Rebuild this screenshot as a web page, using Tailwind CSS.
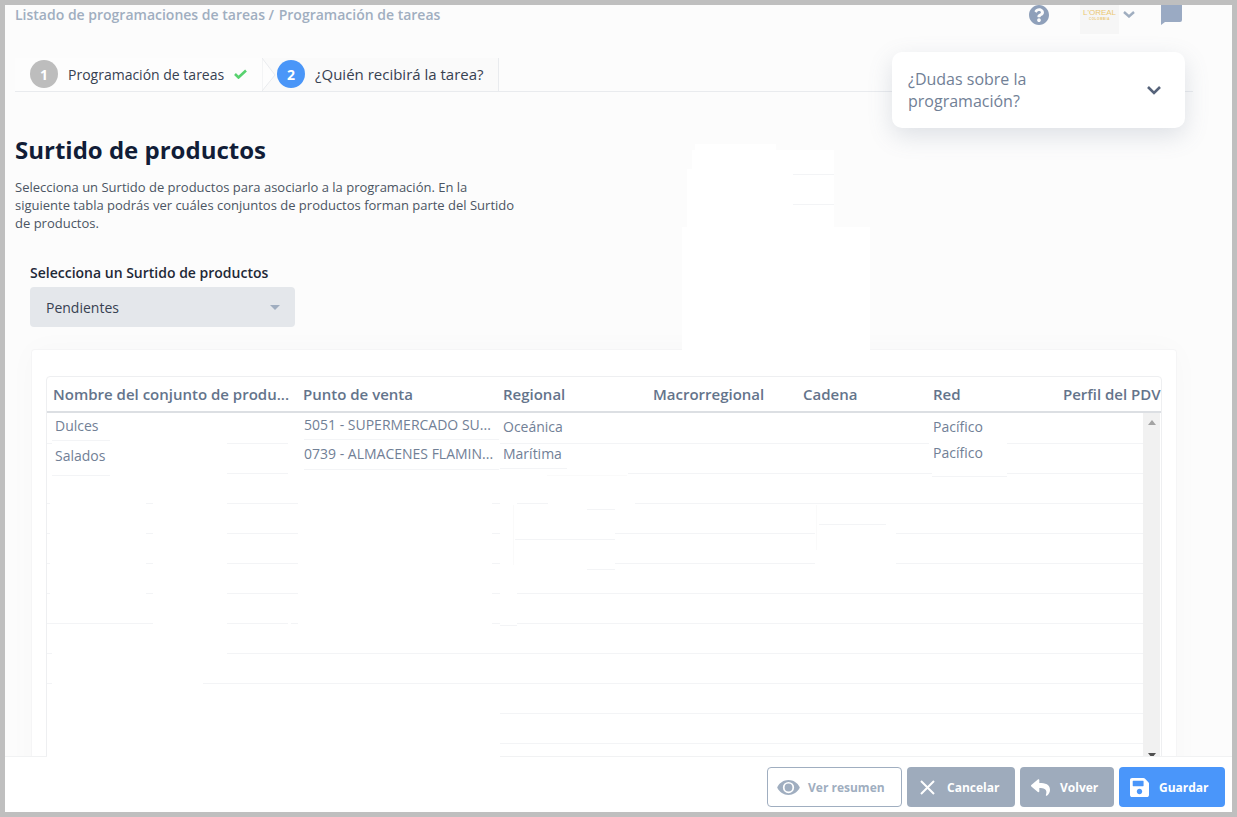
<!DOCTYPE html>
<html lang="es">
<head>
    <meta charset="UTF-8">
    <meta name="viewport" content="width=device-width, initial-scale=1.0">
    <title>Programación de tareas</title>
    <script src="https://cdn.jsdelivr.net/npm/@tailwindcss/browser@4"></script>
</head>
<body class="bg-[#bfbfbf] h-[817px] overflow-hidden p-[5px] font-['Open_Sans',sans-serif]">
    <main class="relative flex flex-col w-[1227px] h-[807px] overflow-hidden bg-[#fcfcfc]">
        <div class="flex-1 min-h-0 overflow-hidden">
            <!-- top bar -->
            <div class="flex items-start h-[53px] pl-[10px] pr-[50px]">
                <p class="text-[14px] leading-[20px] font-semibold text-[#a0aec0]">Listado de programaciones de tareas /<span class="ml-[1px]"> Programación de tareas</span></p>
                <svg class="ml-auto mt-0 w-[20px] h-[20px] fill-[#8fa0ba]" viewBox="8 8 496 496"><path d="M504 256c0 136.997-111.043 248-248 248S8 392.997 8 256C8 119.083 119.043 8 256 8s248 111.083 248 248zM262.655 90c-54.497 0-89.255 22.957-116.549 63.758-3.536 5.286-2.353 12.415 2.715 16.258l34.699 26.31c5.205 3.947 12.621 3.008 16.665-2.122 17.864-22.658 30.113-35.797 57.303-35.797 20.429 0 45.698 13.148 45.698 32.958 0 14.976-12.363 22.667-32.534 33.976C247.128 238.528 216 254.941 216 296v4c0 6.627 5.373 12 12 12h56c6.627 0 12-5.373 12-12v-1.333c0-28.462 83.186-29.647 83.186-106.667 0-58.002-60.165-102-116.531-102zM256 338c-25.365 0-46 20.635-46 46 0 25.364 20.635 46 46 46s46-20.636 46-46c0-25.365-20.635-46-46-46z"/></svg>
                <div class="ml-[31px] flex flex-col items-center justify-start w-[39px] h-[29px] pt-[4px] bg-[#f6f6f6] text-[#ebc873]">
                    <span class="text-[8px] leading-[8px] font-['Liberation_Sans',sans-serif]">L'OREAL</span>
                    <span class="text-[3px] leading-[4px] font-bold tracking-[0.6px] font-['Liberation_Sans',sans-serif]">COLOMBIA</span>
                </div>
                <svg class="ml-[4px] mt-[6px] w-[12px] h-[7px] stroke-[#a0aec0] fill-none" viewBox="0 0 12 7" stroke-width="2.4"><path d="M1 1l5 4.5L11 1"/></svg>
                <svg class="ml-[26px] w-[21px] h-[20px] fill-[#9aaac3]" viewBox="0 0 21 20"><path d="M0 0h21v15a2 2 0 0 1-2 2H4l-4 3z"/></svg>
            </div>

            <!-- steps -->
            <div class="flex ml-[10px] w-[1178px] h-[34px] border-b border-[#e9ebee]">
                <div class="flex items-center w-[247px] pl-[15px] pb-[1px] bg-[#fdfdfd]">
                    <span class="flex items-center justify-center w-[28px] h-[28px] rounded-full bg-[#bdbdbd] text-white text-[14px] font-bold">1</span>
                    <span class="ml-[10px] text-[14px] text-[#374151]">Programación de tareas</span>
                    <svg class="ml-[10px] w-[13px] h-[10px] stroke-[#58d26f] fill-none" viewBox="0 0 13 10" stroke-width="2.6"><path d="M1 5l3.5 3.5L12 1.5"/></svg>
                </div>
                <div class="flex items-center w-[237px] bg-[#fafafa] border-r border-[#e9ebee] pb-[1px]">
                    <svg class="w-[15px] h-[33px] shrink-0" viewBox="0 0 15 33"><path d="M0 0L13 17 0 33z" fill="#fdfdfd" stroke="#e9ebee"/></svg>
                    <span class="flex items-center justify-center w-[28px] h-[28px] rounded-full bg-[#4a96f8] text-white text-[14px] font-bold">2</span>
                    <span class="ml-[10px] text-[15px] text-[#374151]">¿Quién recibirá la tarea?</span>
                </div>
            </div>

            <!-- intro -->
            <h1 class="mt-[42px] ml-[10px] text-[24px] leading-[32px] font-bold text-[#111d37]">Surtido de productos</h1>
            <p class="mt-[12px] ml-[10px] w-[510px] text-[13px] leading-[18px] text-[#4b5563]">Selecciona un Surtido de productos para asociarlo a la programación. En la siguiente tabla podrás ver cuáles conjuntos de productos forman parte del Surtido de productos.</p>

            <label class="block mt-[31px] ml-[25px] text-[14px] leading-[20px] font-semibold text-[#1f2937]">Selecciona un Surtido de productos</label>
            <div class="flex items-center justify-between mt-[4px] ml-[25px] w-[265px] h-[40px] pl-[16px] pr-[15px] rounded bg-[#e4e7eb] text-[14px] text-[#374151]">
                <span>Pendientes</span>
                <span class="w-0 h-0 border-x-[5.5px] border-x-transparent border-t-[5px] border-t-[#a0aec0]"></span>
            </div>

            <!-- table card -->
            <section class="mt-[22px] ml-[26px] w-[1146px] h-[500px] pt-[26px] pl-[14px] bg-white rounded-sm border-t border-l border-r border-[#f5f5f6] shadow-[0_0_30px_rgba(0,0,0,0.025)]">
                <div class="w-[1116px] h-[420px] overflow-hidden rounded-t border border-[#eeeff1]">
                    <div class="grid grid-cols-[250px_200px_150px_150px_130px_130px_130px] h-[36px] border-b-2 border-[#dcdfe3] items-center text-[15px] font-semibold text-[#64748b] whitespace-nowrap">
                        <div class="pl-[6px]">Nombre del conjunto de produ...</div>
                        <div class="pl-[6px]">Punto de venta</div>
                        <div class="pl-[6px]">Regional</div>
                        <div class="pl-[6px]">Macrorregional</div>
                        <div class="pl-[6px]">Cadena</div>
                        <div class="pl-[6px]">Red</div>
                        <div class="pl-[6px]">Perfil del PDV</div>
                    </div>
                    <div class="relative flex">
                        <div class="relative w-[1096px] text-[14px] leading-[20px] text-[#718096] whitespace-nowrap">
                            <svg class="absolute left-0 top-0 w-[1097px] h-[343px] fill-none" viewBox="47 413 1097 343">
                                <path stroke="#f3f4f6" d="M52 440.5H110M304 439.5H499M47 443.5H52M227 443.5H288M500 443.5H929M1007 443.5H1143
                                    M500 468.5H567M304 469.5H499M227 473.5H288M628 473.5H932M1007 473.5H1143M52 475.5H110M932 476.5H1007
                                    M47 503.5H50M146 503.5H153M227 503.5H298M492 503.5H500M517 503.5H548M635 503.5H1143M587 509.5H615
                                    M819 524.5H886M47 533.5H50M146 533.5H153M227 533.5H298M492 533.5H500M615 533.5H815M896 533.5H1143M515 539.5H615
                                    M47 563.5H50M146 563.5H153M227 563.5H298M492 563.5H500M615 563.5H815M896 563.5H1143M587 569.5H615
                                    M47 593.5H50M146 593.5H153M227 593.5H298M492 593.5H500M517 593.5H1143
                                    M47 623.5H153M227 623.5H288M291 623.5H298M492 623.5H500M517 623.5H1143M500 625.5H517
                                    M47 653.5H52M227 653.5H1143M47 683.5H52M203 683.5H1143M500 713.5H1143M500 743.5H1143"/>
                                <path stroke="#fafafa" d="M547 475.5H627M513.5 505V565M816.5 505V550"/>
                            </svg>
                            <div class="relative grid grid-cols-[250px_200px_150px_150px_130px_130px_16px] h-[30px]">
                                <div class="pl-[8px] pt-[3px]">Dulces</div>
                                <div class="pl-[7px] pt-[2px]">5051 - SUPERMERCADO SU...</div>
                                <div class="pl-[6px] pt-[4px]">Oceánica</div>
                                <div></div>
                                <div></div>
                                <div class="pl-[6px] pt-[4px]">Pacífico</div>
                            </div>
                            <div class="relative grid grid-cols-[250px_200px_150px_150px_130px_130px_16px] h-[30px]">
                                <div class="pl-[8px] pt-[3px]">Salados</div>
                                <div class="pl-[7px] pt-[1px]">0739 - ALMACENES FLAMIN...</div>
                                <div class="pl-[6px] pt-[1px]">Marítima</div>
                                <div></div>
                                <div></div>
                                <div class="pl-[6px]">Pacífico</div>
                            </div>
                        </div>
                        <!-- scrollbar -->
                        <div class="flex flex-col items-center justify-between w-[17px] h-[344px] bg-[#f1f1f1] pt-[7px] pb-0">
                            <span class="w-0 h-0 border-x-[4px] border-x-transparent border-b-[5px] border-b-[#a3a3a3]"></span>
                            <span class="w-0 h-0 border-x-[4px] border-x-transparent border-t-[5px] border-t-[#505050] mb-[-1px]"></span>
                        </div>
                    </div>
                </div>
            </section>
        </div>

        <!-- footer actions -->
        <footer class="relative flex justify-end gap-[5px] h-[56px] shrink-0 pt-[10px] pr-[7px] bg-white border-t border-[#f1f2f3] text-[12px] font-bold">
            <span class="absolute left-[42px] top-[-1px] w-[453px] h-px bg-white"></span>
            <button class="flex items-center w-[135px] h-[40px] pl-[9px] rounded border border-[#a0aec0] bg-white text-[#a0aec0]">
                <svg class="w-[23px] h-[15px] fill-[#a0aec0]" viewBox="0 64 576 384"><path fill-rule="evenodd" d="M572.52 241.4C518.29 135.59 410.93 64 288 64S57.68 135.64 3.48 241.41a32.35 32.35 0 0 0 0 29.19C57.71 376.41 165.07 448 288 448s230.32-71.64 284.52-177.41a32.35 32.35 0 0 0 0-29.19zM288 400a144 144 0 1 1 0-288 144 144 0 0 1 0 288z"/><circle cx="288" cy="256" r="100"/></svg>
                <span class="ml-[8px] mt-[1px]">Ver resumen</span>
            </button>
            <button class="flex items-center w-[108px] h-[40px] pl-[13px] rounded bg-[#9eabbc] text-white">
                <svg class="w-[15px] h-[15px] stroke-white fill-none" viewBox="0 0 15 15" stroke-width="2"><path d="M1 1l13 13M14 1L1 14"/></svg>
                <span class="ml-[12px] mt-[1px]">Cancelar</span>
            </button>
            <button class="flex items-center w-[94px] h-[40px] pl-[11px] rounded bg-[#9eabbc] text-white">
                <svg class="w-[19px] h-[19px] fill-white" viewBox="0 0 512 512"><path d="M8.309 189.836L184.313 37.851C199.719 24.546 224 35.347 224 56.015v80.053c160.629 1.839 288 34.032 288 186.258 0 61.441-39.581 122.309-83.333 154.132-13.653 9.931-33.111-2.533-28.077-18.631 45.344-145.012-21.507-183.51-176.59-185.742V360c0 20.7-24.3 31.453-39.687 18.164l-176.004-152c-11.071-9.562-11.086-26.753 0-36.328z"/></svg>
                <span class="ml-[10px] mt-[1px]">Volver</span>
            </button>
            <button class="flex items-center w-[106px] h-[40px] pl-[11px] rounded bg-[#4a96fa] text-white">
                <svg class="w-[19px] h-[19px] fill-white" viewBox="0 32 448 448"><path d="M433.941 129.941l-83.882-83.882A48 48 0 0 0 316.118 32H48C21.49 32 0 53.49 0 80v352c0 26.51 21.49 48 48 48h352c26.51 0 48-21.49 48-48V163.882a48 48 0 0 0-14.059-33.941zM224 416c-35.346 0-64-28.654-64-64 0-35.346 28.654-64 64-64s64 28.654 64 64c0 35.346-28.654 64-64 64zm96-304.52V212c0 6.627-5.373 12-12 12H76c-6.627 0-12-5.373-12-12V108c0-6.627 5.373-12 12-12h228.52c3.183 0 6.235 1.264 8.485 3.515l3.48 3.48A11.996 11.996 0 0 1 320 111.48z"/></svg>
                <span class="ml-[10px] mt-[1px]">Guardar</span>
            </button>
        </footer>

        <!-- help dropdown, floats over the page -->
        <div class="absolute left-[887px] top-[47px] flex items-center justify-between w-[293px] h-[76px] pl-[16px] pr-[24px] rounded-[10px] bg-white shadow-[0_8px_24px_rgba(100,116,139,0.2)]">
            <p class="w-[170px] text-[16px] leading-[22px] text-[#718096]">¿Dudas sobre la programación?</p>
            <svg class="w-[14px] h-[9px] stroke-[#56637a] fill-none" viewBox="0 0 14 9" stroke-width="2.6"><path d="M1 1l6 6 6-6"/></svg>
        </div>

        <!-- blanked out area of the capture -->
        <svg class="absolute left-[677px] top-[139px] w-[188px] h-[206px] fill-white" viewBox="682 144 188 206"><path d="M695 144H776V150H834V227H870V350H682V227H687V169H692V150H695z"/><path d="M793 174.5H834M793 204.5H834" stroke="#f3f4f6" fill="none"/></svg>
    </main>
</body>
</html>
